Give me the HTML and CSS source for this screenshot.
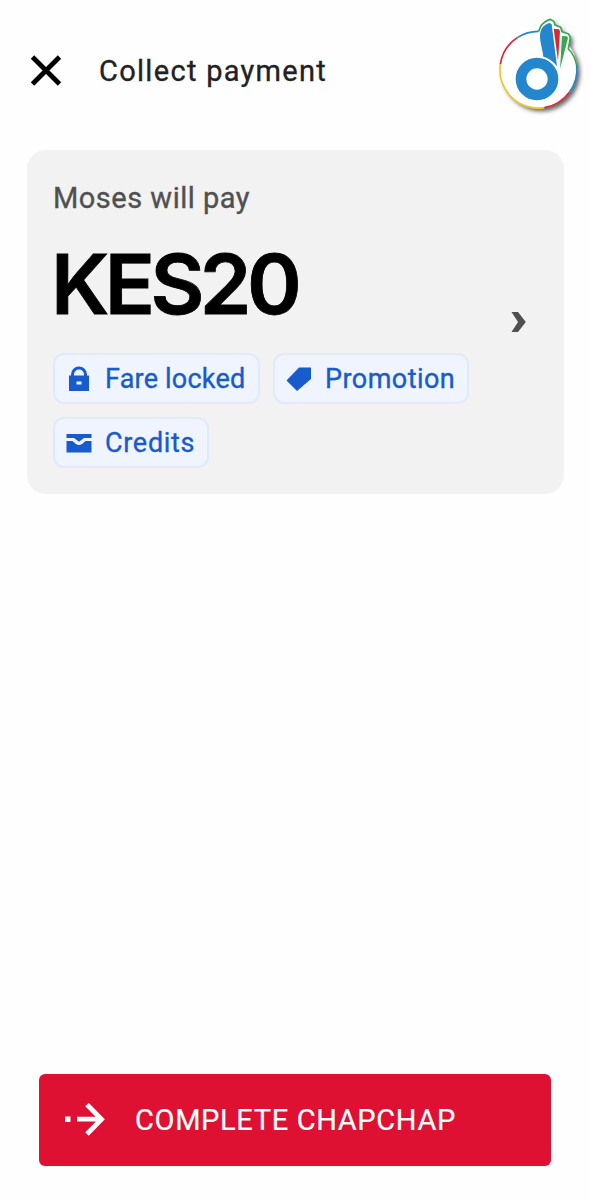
FILE: index.html
```html
<!DOCTYPE html>
<html lang="en">
<head>
  <meta charset="UTF-8" />
  <meta name="viewport" content="width=device-width, initial-scale=1" />
  <title>Collect payment</title>
  <link rel="stylesheet" href="styles.css">
</head>
<body>

<header class="topbar">
  <button class="close" aria-label="Close">
    <svg width="32" height="32" viewBox="0 0 32 32">
      <path d="M2.5 2L29.5 29M29.5 2L2.5 29" fill="none" stroke="#000" stroke-width="4.8" />
    </svg>
  </button>
  <h1 class="title"><span>Collect payment</span></h1>
  <svg class="logo" width="105" height="120" viewBox="0 0 315 360">
    <g class="badge">
      <circle cx="158" cy="194" r="116" fill="#fff" />
      <path d="M158 79L165 62Q176 48 194 43L204 50L207 60L224 67L228 80L248 87L253 98L247 132L205 180Z" fill="#fff" />
    </g>
    <g fill="none" stroke-width="5" stroke-linejoin="round">
      <path d="M94 98A115 115 0 0 1 158 79" stroke="#2486cd" />
      <path d="M43 178A115 115 0 0 1 94 98" stroke="#dd2637" />
      <path d="M175 308A115 115 0 0 1 43 178" stroke="#efc62f" />
      <path d="M250 262A115 115 0 0 1 175 308" stroke="#dd2637" />
      <path d="M272 180A115 115 0 0 1 250 262" stroke="#2486cd" />
      <path d="M158 79L165 62Q176 48 194 43L204 50L207 60L224 67L228 80L248 87L253 98L247 132Q266 150 272 180" stroke="#36a852" />
    </g>
    <path d="M162 92C163 74 170 60 191 54L197 58L213 184C200 166 183 158 172 155C170 132 162 115 162 92Z" fill="#2486cd" />
    <path d="M203 71L219 73L222 79L216 168Z" fill="#dd2637" />
    <path d="M228 93L243 94L246 99L222 192Z" fill="#36a852" />
    <circle cx="153" cy="222" r="48" fill="none" stroke="#2486cd" stroke-width="32" />
  </svg>
</header>

<main class="card">
  <p class="payer"><span>Moses will pay</span></p>
  <p class="amount"><span>KES20</span></p>
  <div class="tags">
    <span class="tag fare">
      <svg width="26" height="26" viewBox="0 0 26 26">
        <path d="M3 9.5H23V25H3Z M10.5 15.5V18.5H15.5V15.5Z" fill="#175bcc" fill-rule="evenodd" />
        <path d="M6.5 11V8.5A6.5 6.5 0 0 1 19.5 8.5V11" fill="none" stroke="#175bcc" stroke-width="3" />
      </svg>
      <span>Fare locked</span>
    </span>
    <span class="tag promo">
      <svg width="26" height="26" viewBox="0 0 26 26">
        <path d="M13 1.5H25V13L11 25L.5 14.5Z" fill="#175bcc" />
      </svg>
      <span>Promotion</span>
    </span>
    <span class="tag credits">
      <svg width="26" height="26" viewBox="0 0 26 26">
        <path d="M.5 4H25.5V8H18L13 11.8L8 8H.5Z" fill="#175bcc" />
        <path d="M.5 11H6.5L10 14Q13 16 16 14L19.5 11H25.5V22.5H.5Z" fill="#175bcc" />
      </svg>
      <span>Credits</span>
    </span>
  </div>
  <svg class="chevron" width="16" height="22" viewBox="0 0 16 22">
    <path d="M.5 1H7L14.8 11L7 21H.5L7 11Z" fill="#505050" />
  </svg>
</main>

<button class="complete">
  <svg width="40" height="34" viewBox="0 0 40 34">
    <path d="M0 13.5H5.5V19H0Z" fill="#fff" />
    <path d="M12 16.2H36M22 1.5L36.5 16.2L22 31" fill="none" stroke="#fff" stroke-width="4.8" />
  </svg>
  <span>COMPLETE CHAPCHAP</span>
</button>

</body>
</html>
```

FILE: styles.css
```css
* {
  box-sizing: border-box;
}
body {
  margin: 0;
  height: 1200px;
  display: flex;
  flex-direction: column;
  background: #fefefe;
  color: #000;
  font-family: Roboto, "Liberation Sans", sans-serif;
}
button {
  border: 0;
  padding: 0;
  font-family: inherit;
}
svg {
  display: block;
  flex: none;
}
.topbar {
  display: flex;
  align-items: center;
  height: 150px;
  padding: 0 0 20px 30px;
}
.close {
  background: none;
  margin-top: 12px;
}
.title {
  flex: 1;
  margin: 12px 0 0 37px;
  font-size: 29px;
  font-weight: 400;
  letter-spacing: 1.3px;
  color: #222;
  -webkit-text-stroke: 0.35px;
}
.logo {
  position: relative;
  left: 1px;
}
.badge {
  filter: drop-shadow(8px 9px 6px rgba(0, 0, 0, 0.6));
}
.card {
  position: relative;
  width: 537px;
  height: 344px;
  margin-left: 27px;
  padding: 30px 26px 0;
  border-radius: 19px;
  background: #f2f2f2;
}
.payer {
  margin: 0;
  font-size: 29px;
  line-height: 36px;
  letter-spacing: 0.5px;
  color: #505050;
  -webkit-text-stroke: 0.35px;
}
.amount {
  margin: 20px 0 0 -2px;
  font-family: Inter, Roboto, sans-serif;
  font-size: 83px;
  font-weight: 600;
  line-height: 96px;
  letter-spacing: -4.6px;
  -webkit-text-stroke: 0.8px;
}
.tags {
  display: flex;
  flex-wrap: wrap;
  gap: 13px;
  margin-top: 21px;
}
.tag {
  display: flex;
  align-items: center;
  gap: 13px;
  height: 51px;
  padding-left: 11px;
  border: 2px solid #e0eafa;
  border-radius: 11px;
  background: #eff4fe;
  color: #175bcc;
  font-size: 27px;
  letter-spacing: 0.7px;
  white-space: nowrap;
  -webkit-text-stroke: 0.35px;
}
.fare {
  width: 207px;
  letter-spacing: 0.2px;
}
.promo {
  width: 196px;
  letter-spacing: 0.45px;
}
.credits {
  width: 156px;
}
.chevron {
  position: absolute;
  right: 37px;
  top: 161px;
}
.complete {
  display: flex;
  align-items: center;
  gap: 30px;
  width: 512px;
  height: 92px;
  margin: auto 0 34px 39px;
  padding-left: 26px;
  border-radius: 6px;
  background: #de1133;
  color: #fff;
  font-size: 29px;
  letter-spacing: 0.65px;
  -webkit-text-stroke: 0.2px;
}
```
